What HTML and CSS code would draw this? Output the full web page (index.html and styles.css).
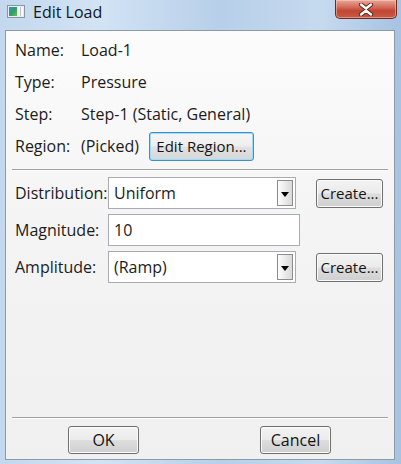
FILE: index.html
```html
<!DOCTYPE html>
<html lang="en">
<head>
    <meta charset="UTF-8">
    <meta name="viewport" content="width=device-width, initial-scale=1.0">
    <title>Edit Load</title>
    <link rel="stylesheet" href="styles.css">
</head>
<body>
    <div class="window">
        <div class="titlebar">
            <svg class="app-icon" width="18" height="13" viewBox="0 0 18 13">
                <defs>
                    <linearGradient id="pane" x1="0" y1="0" x2="1" y2="1">
                        <stop offset="0" stop-color="#3f8fd0"/>
                        <stop offset="0.5" stop-color="#2e9e6a"/>
                        <stop offset="1" stop-color="#6cbf4a"/>
                    </linearGradient>
                </defs>
                <rect x="0.5" y="0.5" width="17" height="12" fill="#e9eef3" stroke="#8a96a3"/>
                <rect x="2" y="2" width="8" height="9" fill="url(#pane)"/>
                <rect x="11" y="2" width="5" height="9" fill="#f8fafc"/>
                <line x1="13.5" y1="2" x2="13.5" y2="11" stroke="#b8c2cc"/>
            </svg>
            <span class="title">Edit Load</span>
            <div class="close-btn">
                <svg width="16" height="13" viewBox="0 0 16 13">
                    <path d="M3 1.5 L8 5.5 L13 1.5 M3 11.5 L8 7.5 L13 11.5" fill="none" stroke="#5a2019" stroke-width="4.2" stroke-linecap="round"/>
                    <path d="M3 1.5 L8 5.5 L13 1.5 M3 11.5 L8 7.5 L13 11.5" fill="none" stroke="#ffffff" stroke-width="2.4" stroke-linecap="round"/>
                </svg>
            </div>
        </div>

        <div class="client">
            <div class="info">
                <div class="info-row"><span class="label">Name:</span><span>Load-1</span></div>
                <div class="info-row"><span class="label">Type:</span><span>Pressure</span></div>
                <div class="info-row"><span class="label">Step:</span><span>Step-1 (Static, General)</span></div>
                <div class="info-row">
                    <span class="label">Region:</span><span>(Picked)</span>
                    <button class="btn btn-focus region-btn">Edit Region...</button>
                </div>
            </div>

            <div class="sep"></div>

            <div class="form-grid">
                <span class="label">Distribution:</span>
                <div class="combo"><span>Uniform</span><span class="arrow"></span></div>
                <button class="btn create-btn">Create...</button>

                <span class="label">Magnitude:</span>
                <div class="text-input">10</div>
                <span></span>

                <span class="label">Amplitude:</span>
                <div class="combo"><span>(Ramp)</span><span class="arrow"></span></div>
                <button class="btn create-btn">Create...</button>
            </div>

            <div class="footer">
                <div class="sep"></div>
                <div class="actions">
                    <button class="btn action-btn">OK</button>
                    <button class="btn action-btn">Cancel</button>
                </div>
            </div>
        </div>
    </div>
</body>
</html>
```

FILE: styles.css
```css
body {
    margin: 0;
    padding: 0;
    font-family: "Open Sans", "Noto Sans", sans-serif;
    font-size: 16px;
    color: #1c1c1c;
}

/* window frame */
.window {
    width: 401px;
    height: 464px;
    display: flex;
    flex-direction: column;
    background: linear-gradient(90deg, #c3d8ee 0%, #d2e3f4 25%, #b7cfe9 55%, #c6daef 80%, #a6c3e2 100%);
    overflow: hidden;
}

.titlebar {
    height: 30px;
    display: flex;
    align-items: flex-start;
    flex-shrink: 0;
}

.app-icon {
    margin: 5px 0 0 7px;
}

.title {
    margin: 1px 0 0 8px;
    font-size: 16px;
    color: #101820;
}

.close-btn {
    margin-left: auto;
    margin-right: 4px;
    width: 60px;
    height: 18px;
    border: 1px solid #6e2a20;
    border-top: none;
    border-radius: 0 0 5px 5px;
    background: linear-gradient(180deg, #e8a898 0%, #d46a58 40%, #c14632 60%, #c85a45 100%);
    box-shadow: inset 0 0 0 1px rgba(255, 220, 210, 0.45);
    display: flex;
    align-items: center;
    justify-content: center;
}

/* dialog body */
.client {
    flex: 1;
    margin: 0 6px 4px 5px;
    border: 1px solid #8d9aa8;
    background: linear-gradient(180deg, #fcfcfc 0%, #f4f4f4 45%, #f0f0f0 100%);
    display: flex;
    flex-direction: column;
    padding: 3px 6px 0 9px;
}

.info-row {
    height: 32px;
    display: flex;
    align-items: center;
}

.info-row .label {
    width: 66px;
    flex-shrink: 0;
}

.region-btn {
    margin-left: 10px;
    width: 105px;
    height: 29px;
}

.sep {
    height: 1px;
    margin: 7px 0 6px -3px;
    background-color: #a0a0a0;
    border-bottom: 1px solid #ffffff;
}

.form-grid {
    display: grid;
    grid-template-columns: 93px 208px 67px;
    row-gap: 5px;
    grid-auto-rows: 32px;
    align-items: center;
}

.combo {
    width: 188px;
    height: 32px;
    box-sizing: border-box;
    border: 1px solid #a8acb2;
    background-color: #fff;
    display: flex;
    align-items: center;
    padding-left: 5px;
    position: relative;
}

.combo .arrow {
    position: absolute;
    right: 2px;
    top: 2px;
    bottom: 2px;
    width: 14px;
    border: 1px solid #8c8c8c;
    background: linear-gradient(90deg, #fdfdfd, #d9d9d9);
}

.combo .arrow::after {
    content: "";
    position: absolute;
    left: 3px;
    top: 11px;
    border-left: 4px solid transparent;
    border-right: 4px solid transparent;
    border-top: 5px solid #000;
}

.text-input {
    width: 192px;
    height: 32px;
    box-sizing: border-box;
    border: 1px solid #a8acb2;
    background-color: #fff;
    display: flex;
    align-items: center;
    padding-left: 5px;
}

/* push buttons */
.btn {
    font: inherit;
    font-size: 15px;
    color: #141414;
    padding: 0;
    border: 1px solid #707070;
    border-radius: 3px;
    background: linear-gradient(180deg, #f3f3f3 0%, #ebebeb 48%, #dddddd 52%, #cfcfcf 100%);
    box-shadow: inset 0 0 0 1px #fbfbfb;
}

.btn-focus {
    border-color: #3c8fcb;
    box-shadow: inset 0 0 0 1px #9fdcfa;
    background: linear-gradient(180deg, #f6f6f6 0%, #eeeeee 48%, #e2e2e2 52%, #d6d6d6 100%);
}

.create-btn {
    width: 67px;
    height: 29px;
}

.footer {
    margin-top: auto;
    padding-bottom: 5px;
}

.footer .sep {
    margin: 0 0 7px -3px;
}

.actions {
    display: flex;
    padding-left: 53px;
}

.action-btn {
    width: 71px;
    height: 28px;
    font-size: 16px;
}

.action-btn + .action-btn {
    margin-left: 121px;
}
```
